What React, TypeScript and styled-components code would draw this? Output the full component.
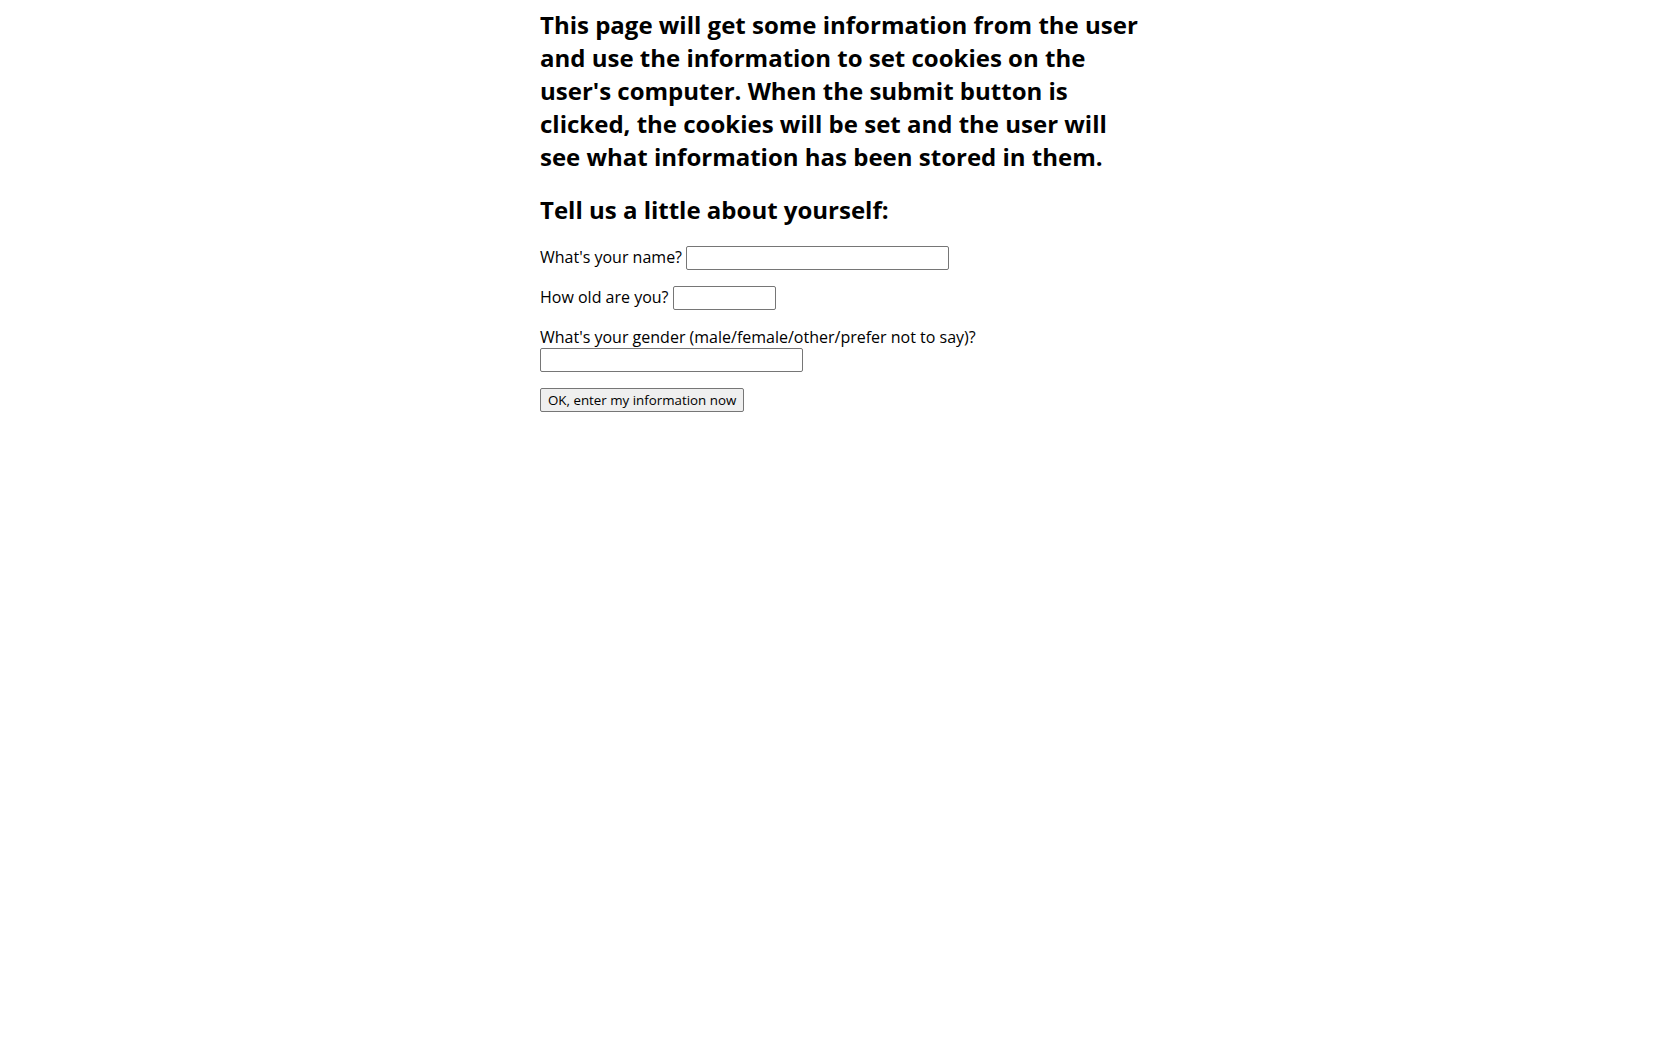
import React from "react";
import styled, { createGlobalStyle } from "styled-components";

const GlobalStyle = createGlobalStyle`
  html, body {
    margin: 0;
    padding: 0;
    background: #ffffff;
  }
  body {
    font-family: "Open Sans", "Liberation Sans", sans-serif;
    color: #000000;
    font-size: 16px;
  }
`;

const Page = styled.main`
  width: 600px;
  margin: 0 auto;
  padding-top: 8px;
`;

const Heading = styled.h2<{ $first?: boolean }>`
  font-size: 24px;
  font-weight: 700;
  line-height: normal;
  margin: ${(p) => (p.$first ? "0 0 20px" : "20px 0")};
`;

const Form = styled.form`
  margin: 0;
`;

const Row = styled.p`
  margin: 16px 0;
  line-height: normal;
`;

const Label = styled.label`
  font-size: 16px;
  margin-right: 4px;
`;

const TextInput = styled.input<{ $w: number }>`
  box-sizing: border-box;
  width: ${(p) => p.$w}px;
  height: 24px;
  border: 1px solid #767676;
  border-radius: 2px;
  padding: 1px 2px;
  font-family: "Open Sans", "Liberation Sans", sans-serif;
  font-size: 13.33px;
  background: #ffffff;
`;

const SubmitButton = styled.button`
  box-sizing: border-box;
  height: 24px;
  padding: 1px 7px;
  border: 1px solid #767676;
  border-radius: 2px;
  background: #efefef;
  color: #000000;
  font-family: "Open Sans", "Liberation Sans", sans-serif;
  font-size: 13.33px;
`;

export default function App() {
  return (
    <>
      <GlobalStyle />
      <Page>
        <Heading $first>
          This page will get some information from the user and use the
          information to set cookies on the user's computer. When the submit
          button is clicked, the cookies will be set and the user will see what
          information has been stored in them.
        </Heading>
        <Heading>Tell us a little about yourself:</Heading>
        <Form onSubmit={(e) => e.preventDefault()}>
          <Row>
            <Label htmlFor="name">What's your name?</Label>
            <TextInput id="name" type="text" $w={263} />
          </Row>
          <Row>
            <Label htmlFor="age">How old are you?</Label>
            <TextInput id="age" type="text" $w={103} />
          </Row>
          <Row>
            <Label htmlFor="gender">
              What's your gender (male/female/other/prefer not to say)?
            </Label>
            <TextInput id="gender" type="text" $w={263} />
          </Row>
          <Row>
            <SubmitButton type="submit">OK, enter my information now</SubmitButton>
          </Row>
        </Form>
      </Page>
    </>
  );
}
